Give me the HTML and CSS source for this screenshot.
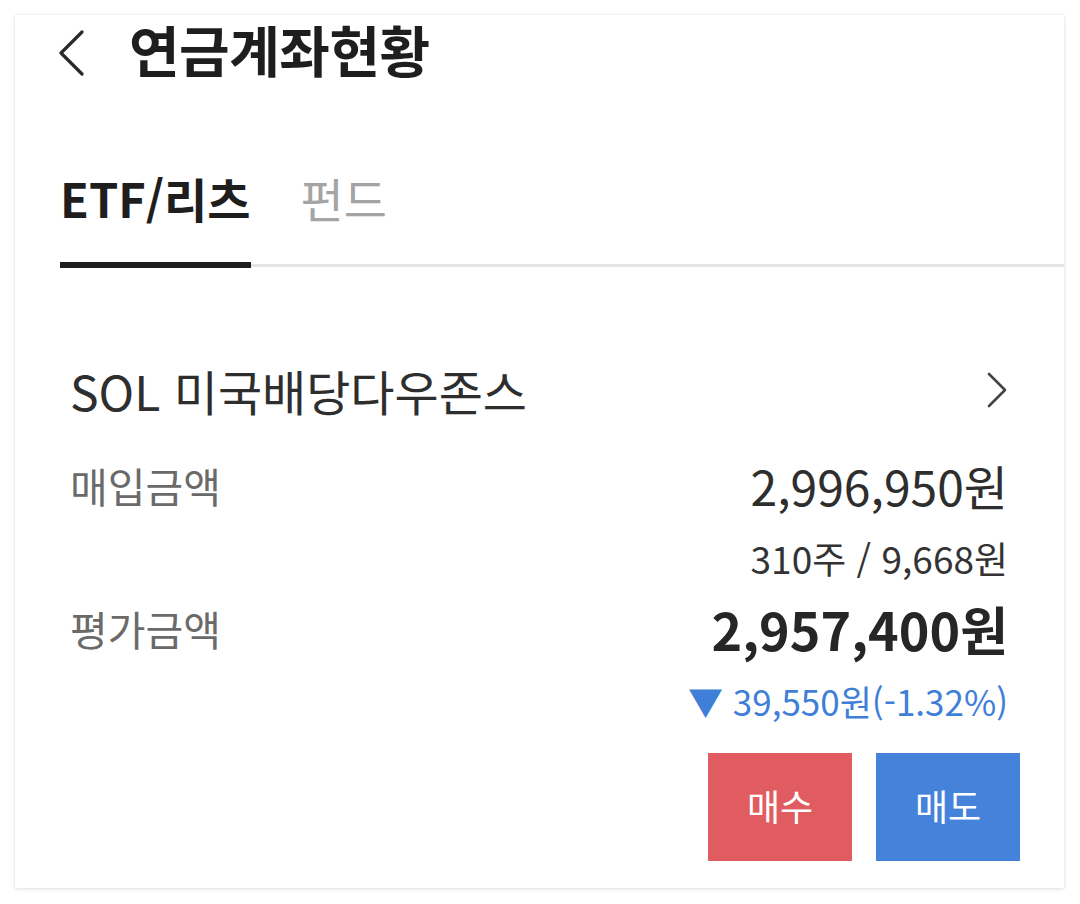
FILE: index.html
```html
<!DOCTYPE html>
<html lang="ko">
<head>
<meta charset="utf-8">
<title>연금계좌현황</title>
<link rel="stylesheet" href="styles.css">
</head>
<body>
<div class="card">
  <header class="header">
    <svg class="back" width="26" height="48" viewBox="0 0 26 48" aria-hidden="true">
      <polyline points="23,3 2,24 23,45" fill="none" stroke="#2a2a2a" stroke-width="3.2" stroke-linecap="round" stroke-linejoin="round"/>
    </svg>
    <h1 class="title">연금계좌현황</h1>
  </header>
  <nav class="tabs">
    <div class="tab active">ETF/리츠</div>
    <div class="tab">펀드</div>
  </nav>
  <section class="content">
    <div class="name-row">
      <div class="name">SOL 미국배당다우존스</div>
      <svg class="more" width="22" height="36" viewBox="0 0 22 36" aria-hidden="true">
        <polyline points="3,2 19,18 3,34" fill="none" stroke="#444" stroke-width="2.6" stroke-linecap="round" stroke-linejoin="round"/>
      </svg>
    </div>
    <div class="row row-buy">
      <div class="label">매입금액</div>
      <div class="value">2,996,950원</div>
    </div>
    <div class="sub">310주 / 9,668원</div>
    <div class="row row-eval">
      <div class="label">평가금액</div>
      <div class="value strong">2,957,400원</div>
    </div>
    <div class="change">▼ 39,550원(-1.32%)</div>
    <div class="actions">
      <button class="btn buy">매수</button>
      <button class="btn sell">매도</button>
    </div>
  </section>
</div>
</body>
</html>
```

FILE: styles.css
```css
* { box-sizing: border-box; }
html, body {
  margin: 0;
  padding: 0;
  background: #ffffff;
}
body {
  font-family: "Noto Sans CJK KR", "Noto Sans", sans-serif;
  width: 1080px;
  height: 904px;
  overflow: hidden;
  padding: 15px 16px 0 15px;
}
.card {
  width: 1049px;
  height: 873px;
  background: #fff;
  box-shadow: 0 1px 4px rgba(0,0,0,0.12), 0 0 1px rgba(0,0,0,0.10);
  display: flex;
  flex-direction: column;
}
.header {
  height: 75px;
  display: flex;
  align-items: center;
  padding-left: 44px;
}
.back { display: block; margin-right: 44px; }
.title {
  margin: 0 0 8px 0;
  font-size: 55px;
  font-weight: 700;
  color: #1e1e1e;
  line-height: 75px;
  letter-spacing: -0.5px;
}
.tabs {
  margin-top: 78px;
  margin-left: 45px;
  display: flex;
  gap: 50px;
  border-bottom: 3px solid #e3e4e8;
  height: 99px;
  align-items: flex-start;
}
.tab {
  font-size: 47px;
  line-height: 60px;
  color: #a4a4a4;
  height: 100px;
}
.tab.active {
  color: #1e1e1e;
  font-weight: 700;
  border-bottom: 6px solid #1e1e1e;
}
.content {
  padding: 0 56px 0 55px;
  display: flex;
  flex-direction: column;
}
.name-row {
  margin-top: 93px;
  height: 60px;
  display: flex;
  align-items: center;
  justify-content: space-between;
}
.name {
  font-size: 48px;
  color: #2e2e2e;
  line-height: 60px;
}
.more { display: block; margin-right: 0; }
.row {
  display: flex;
  justify-content: space-between;
  align-items: center;
}
.row-buy { margin-top: 37px; height: 56px; }
.row-eval { margin-top: 20px; height: 60px; }
.label {
  font-size: 41px;
  color: #6a6a6a;
}
.value {
  font-size: 48px;
  color: #2e2e2e;
}
.value.strong {
  font-size: 52px;
  font-weight: 700;
  color: #262626;
}
.sub {
  margin-top: 25px;
  text-align: right;
  font-size: 37px;
  line-height: 40px;
  color: #333;
}
.change {
  margin-top: 23px;
  text-align: right;
  font-size: 35px;
  line-height: 40px;
  color: #3f7fd8;
}
.actions {
  margin-top: 32px;
  margin-right: -12px;
  display: flex;
  justify-content: flex-end;
  gap: 24px;
}
.btn {
  width: 144px;
  height: 108px;
  border: 0;
  color: #fff;
  font-family: inherit;
  font-size: 36px;
  padding: 0 0 4px 0;
}
.btn.buy { background: #e05c61; }
.btn.sell { background: #4583db; }
```
